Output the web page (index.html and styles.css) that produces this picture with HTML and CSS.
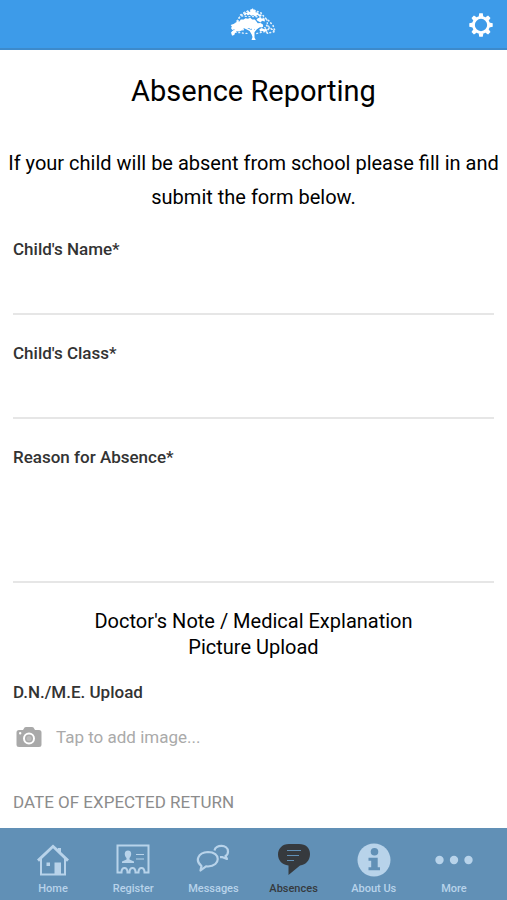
FILE: index.html
```html
<!DOCTYPE html>
<html lang="en">
<head>
<meta charset="utf-8">
<meta name="viewport" content="width=device-width, initial-scale=1">
<title>Absence Reporting</title>
<link rel="stylesheet" href="styles.css">
</head>
<body>
<header class="topbar">
  <svg class="tree" viewBox="30 20 147 114" aria-hidden="true">
    <g fill="#fff">
      <path d="M47 72l5-7 7 1 4-6 9 0 5-4 8 2 7-3 6 5 8 0 5 6 4 6 8-1 7 4 2 6-5 4-8-2-5 5-9 2-4-5-7 5-6-4-8 4-7-3-7 5-9-2-7 4-7-4-6 2-4-6 3-4-4-5z"/>
      <path d="M72 44l5-5 5 2 3-7 6 3 5-8 4-3 3 6 6 0-1 6 8 1 2 5 9 1-1 5-6 0-6-4-6 5-7-4-6 2-5-4-5 3-5-5-4 6z"/>
      <path d="M114 57l8-4 5 4 9 2 1 7-9-2-4 5-9-4-4-4zM120 90l7-4 8 4 5-2 3 5-8 5-5-3-8 3z"/>
      <path d="M33 101l4-6 6-2 2-5 8 2 7-4 7 4 5-1 1 4-8 1-6 3-9-1-5 6-2 6-6 1z"/>
      <path d="M96 105l-6-10-10-5 2-3 14 5 2-10 5-1 1 11 8-8 12-6 2 3-13 8-8 10 0 16 4 8-13 0 3-9z"/>
    </g>
    <g fill="none" stroke="#fff" stroke-linecap="round" opacity=".85">
      <path stroke-width="5" stroke-dasharray="2 9" d="M46 74L60 52 75 38 100 30 125 40 136 54 150 65 162 79 168 97 150 101 137 97 150 86 140 76"/>
      <path stroke-width="4" stroke-dasharray="3 8" d="M37 107L46 84 62 46 88 32M66 49l15 2 40 1 22 9 2 17 19 17M116 76l16 7 15 8 18-1M46 99l26 3 14 1M112 103l25-6 15 10"/>
    </g>
  </svg>
  <button class="settings" type="button" aria-label="Settings">
    <svg viewBox="0 0 24 24" aria-hidden="true">
      <circle cx="12" cy="12" r="7" fill="none" stroke="#fff" stroke-width="2.600"/>
      <g fill="#fff">
        <path id="tooth" d="M9.800 4.500L10.400 1.200h3.200l.6 3.300z"/>
        <use href="#tooth" transform="rotate(45 12 12)"/>
        <use href="#tooth" transform="rotate(90 12 12)"/>
        <use href="#tooth" transform="rotate(135 12 12)"/>
        <use href="#tooth" transform="rotate(180 12 12)"/>
        <use href="#tooth" transform="rotate(225 12 12)"/>
        <use href="#tooth" transform="rotate(270 12 12)"/>
        <use href="#tooth" transform="rotate(315 12 12)"/>
      </g>
    </svg>
  </button>
</header>

<main class="content">
  <h1 class="title">Absence Reporting</h1>
  <p class="intro">If your child will be absent from school please fill in and submit the form below.</p>
  <form class="form">
    <div class="fields">
      <div class="field">
        <label for="child-name">Child's Name*</label>
        <input id="child-name" type="text">
      </div>
      <div class="field">
        <label for="child-class">Child's Class*</label>
        <input id="child-class" type="text">
      </div>
      <div class="field">
        <label for="reason">Reason for Absence*</label>
        <textarea id="reason"></textarea>
      </div>
    </div>
    <h2 class="subtitle">Doctor's Note / Medical Explanation<br>Picture Upload</h2>
    <div class="upload">
      <span class="upload-label" id="upload-label">D.N./M.E. Upload</span>
      <button class="add-image" type="button" aria-describedby="upload-label">
        <svg viewBox="0 0 26 22" aria-hidden="true">
          <path fill="#a9a9a9" fill-rule="evenodd" d="M3 4h4l1.500-2.500Q9 1 10 1h6q1 0 1.500.5L19 4h4q2.500 0 2.500 2.500v12q0 2.500-2.500 2.500H3Q.5 21 .5 18.500v-12Q.5 4 3 4zM13 6.500a6 6 0 1 0 0 12a6 6 0 1 0 0-12zM4.200 6a1.200 1.200 0 1 0 0 2.400a1.200 1.200 0 1 0 0-2.400z"/>
          <circle cx="13" cy="12.500" r="4" fill="#a9a9a9"/>
          <circle cx="13" cy="12.500" r="2.500" fill="#bcbcbc"/>
        </svg>
        <span>Tap to add image...</span>
      </button>
    </div>
    <h3 class="section">DATE OF EXPECTED RETURN</h3>
  </form>
</main>

<nav class="tabs">
  <a class="tab" href="#home">
    <svg viewBox="0 0 34 34" aria-hidden="true">
      <path fill="none" stroke="currentColor" stroke-width="2" d="M5 16v15.500h24V16"/>
      <path fill="currentColor" d="M18.500 19.500H25V31h-6.500zM10.500 19.500H14V23h-3.500zM1 16.500L17 1.500l5 4.600V5h3v4l8 7.500-2 2.200L17 5.200 3 18.700z"/>
    </svg>
    <span>Home</span>
  </a>
  <a class="tab" href="#register">
    <svg viewBox="0 0 34 34" aria-hidden="true">
      <path fill="none" stroke="currentColor" stroke-width="2" d="M1.500 2.500h31v27h-4c0-6-6-6-6 0h-3c0-6-6-6-6 0h-2c0-6-6-6-6 0h-4z"/>
      <path fill="currentColor" d="M12 7.500c-4 0-4 5-1.500 7.500v1.500l-4.500 2V20h12v-1.500l-4.500-2V15c2.500-2.500 2.500-7.500-1.500-7.500z"/>
      <path fill="none" stroke="currentColor" stroke-width="1.200" d="M20 11.500h8M20 16h8"/>
    </svg>
    <span>Register</span>
  </a>
  <a class="tab" href="#messages">
    <svg viewBox="0 0 34 34" aria-hidden="true">
      <g fill="none" stroke="currentColor" stroke-width="2.200" stroke-linejoin="round">
        <path d="M5.500 23C-1 18 1.500 9.500 12 9c13 0 13 14 0 14.500l-2-.2-5.500 4.200z"/>
        <path d="M18.500 7.500c1-6 13.500-6.500 13.500 1 0 2.500-1.500 4-2.500 4.500l1.500 3-5-2-2 .2"/>
      </g>
    </svg>
    <span>Messages</span>
  </a>
  <a class="tab tab-active" href="#absences" aria-current="page">
    <svg viewBox="0 0 34 34" aria-hidden="true">
      <path fill="currentColor" d="M12 1h10c7 0 11 4 11 10s-4 11-10 11.500L11.500 32v-9.500C5 22 1 17 1 11.500S5 1 12 1z"/>
      <path fill="none" stroke="#6190b6" stroke-width="1.200" d="M10 7.500h14M10 12.500h12M10 17.500h7"/>
    </svg>
    <span>Absences</span>
  </a>
  <a class="tab" href="#about">
    <svg viewBox="0 0 34 34" aria-hidden="true">
      <circle cx="17" cy="17" r="16.500" fill="currentColor"/>
      <circle cx="17.500" cy="8.800" r="3.800" fill="#6190b6"/>
      <path fill="#6190b6" d="M11.500 14.800h9.200v9.400h2.300v3H11.500v-3h2.700v-6.400h-2.700z"/>
    </svg>
    <span>About Us</span>
  </a>
  <a class="tab" href="#more">
    <svg class="dots" viewBox="0 0 38 34" aria-hidden="true">
      <g fill="currentColor">
        <circle cx="4.500" cy="17" r="4.200"/>
        <circle cx="19" cy="17" r="4.200"/>
        <circle cx="33.500" cy="17" r="4.200"/>
      </g>
    </svg>
    <span>More</span>
  </a>
</nav>
</body>
</html>
```
FILE: styles.css
```css
* {
  box-sizing: border-box;
}

body {
  margin: 0;
  min-height: 100vh;
  display: flex;
  flex-direction: column;
  background: #fff;
  color: #000;
  font-family: Roboto, "Liberation Sans", sans-serif;
}

.topbar {
  display: grid;
  grid-template-columns: 1fr auto 1fr;
  align-items: center;
  height: 50px;
  padding: 0 13px;
  background: #3d9be9;
  box-shadow: inset 0 -2px #3d8acb;
}

.tree {
  grid-column: 2;
  width: 48px;
  height: 38px;
}

.settings {
  justify-self: end;
  display: flex;
  padding: 0;
  border: 0;
  background: none;
}

.settings svg {
  width: 26px;
  height: 26px;
}

.content {
  flex: 1;
  padding: 23px 13px 0;
}

.title {
  margin: 0 0 37px;
  font-size: 29px;
  line-height: 36px;
  font-weight: 400;
  text-align: center;
}

.intro {
  margin: 0 -8px 25px;
  font-size: 20px;
  line-height: 34px;
  text-align: center;
}

.fields {
  display: grid;
  gap: 28px;
}

.field {
  display: flex;
  flex-direction: column;
}

.field label,
.upload-label {
  color: #333;
  font-size: 17px;
  line-height: 20px;
  font-weight: 500;
}

.field input,
.field textarea {
  width: 100%;
  height: 56px;
  padding: 8px 0;
  border: 0;
  border-bottom: 2px solid #e6e6e6;
  border-radius: 0;
  background: none;
  color: #333;
  font: inherit;
  font-size: 17px;
  outline: 0;
  resize: none;
}

.field textarea {
  height: 116px;
}

.subtitle {
  margin: 25px 0 22px;
  font-size: 20px;
  line-height: 26px;
  font-weight: 400;
  text-align: center;
}

.upload {
  display: flex;
  flex-direction: column;
  align-items: flex-start;
  gap: 24px;
}

.add-image {
  display: flex;
  align-items: center;
  gap: 14px;
  padding: 0 3px;
  border: 0;
  background: none;
  color: #aaa;
  font: inherit;
  font-size: 17px;
  line-height: 22px;
}

.add-image svg {
  width: 26px;
  height: 22px;
}

.section {
  margin: 44px 0 15px;
  color: #8c8c8c;
  font-size: 17px;
  line-height: 20px;
  font-weight: 400;
}

.tabs {
  position: sticky;
  bottom: 0;
  display: grid;
  grid-template-columns: repeat(6, 1fr);
  padding: 0 13px;
  height: 72px;
  background: #6190b6;
}

.tab {
  display: flex;
  flex-direction: column;
  align-items: center;
  gap: 5px;
  padding-top: 15px;
  color: #b8d3ea;
  font-size: 11px;
  line-height: 14px;
  font-weight: 500;
  text-decoration: none;
}

.tab svg {
  width: 34px;
  height: 34px;
}

.tab .dots {
  width: 38px;
}

.tab-active {
  color: #363a3e;
}
```
